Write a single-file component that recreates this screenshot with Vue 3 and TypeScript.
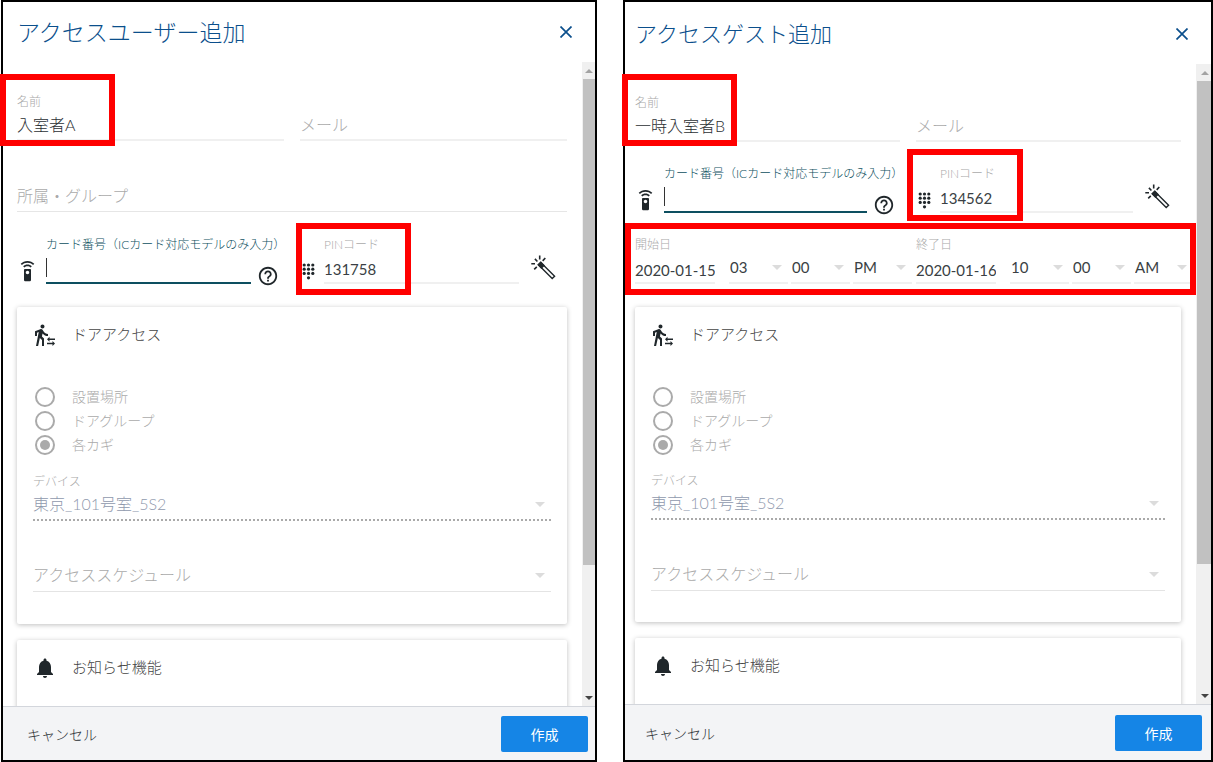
<script setup lang="ts">
import { reactive } from 'vue'

interface TimeSpan {
  key: string
  label: string
  date: string
  hour: string
  minute: string
  half: string
}

interface Dialog {
  id: string
  title: string
  name: string
  hasGroup: boolean
  group: string
  mail: string
  card: string
  pin: string
  access: string
  spans: TimeSpan[]
  marks: string[]
}

const dialogs = reactive<Dialog[]>([
  {
    id: 'user',
    title: 'アクセスユーザー追加',
    name: '入室者A',
    hasGroup: true,
    group: '',
    mail: '',
    card: '',
    pin: '131758',
    access: 'key',
    spans: [],
    marks: ['name', 'pin'],
  },
  {
    id: 'guest',
    title: 'アクセスゲスト追加',
    name: '一時入室者B',
    hasGroup: false,
    group: '',
    mail: '',
    card: '',
    pin: '134562',
    access: 'key',
    spans: [
      { key: 'start', label: '開始日', date: '2020-01-15', hour: '03', minute: '00', half: 'PM' },
      { key: 'end', label: '終了日', date: '2020-01-16', hour: '10', minute: '00', half: 'AM' },
    ],
    marks: ['name', 'pin', 'period'],
  },
])

const accessTypes = [
  { value: 'place', label: '設置場所' },
  { value: 'group', label: 'ドアグループ' },
  { value: 'key', label: '各カギ' },
]
</script>

<template>
  <main class="page">
    <section v-for="d in dialogs" :key="d.id" class="dialog" :class="d.id" role="dialog" :aria-labelledby="d.id + '-title'">
      <header class="head">
        <h1 :id="d.id + '-title'" class="title">{{ d.title }}</h1>
        <button class="close" type="button" aria-label="閉じる">
          <svg width="12" height="12" viewBox="0 0 12 12"><path d="M.5.5l11 11M11.5.5l-11 11" fill="none" stroke="currentColor" stroke-width="1.7" /></svg>
        </button>
      </header>

      <div class="body">
        <form class="form" @submit.prevent>
          <div class="pair">
            <div class="field">
              <label :for="d.id + '-name'">名前</label>
              <input :id="d.id + '-name'" v-model="d.name" type="text" />
            </div>
            <div class="field">
              <label></label>
              <input v-model="d.mail" type="text" placeholder="メール" aria-label="メール" />
            </div>
          </div>

          <div v-if="d.hasGroup" class="field group">
            <label></label>
            <input v-model="d.group" class="thin" type="text" placeholder="所属・グループ" aria-label="所属・グループ" />
          </div>

          <div class="pair codes">
            <div class="cardno">
              <svg class="remote" width="21" height="21" viewBox="0 0 24 24"><path fill="currentColor" d="M15 9H9c-.55 0-1 .45-1 1v12c0 .55.45 1 1 1h6c.55 0 1-.45 1-1V10c0-.55-.45-1-1-1zm-3 6c-1.1 0-2-.9-2-2s.9-2 2-2 2 .9 2 2-.9 2-2 2zM7.05 6.05l1.41 1.41C9.37 6.56 10.62 6 12 6s2.63.56 3.54 1.46l1.41-1.41C15.68 4.78 13.93 4 12 4s-3.68.78-4.95 2.05zM12 0C8.96 0 6.21 1.23 4.22 3.22l1.41 1.41C7.26 3.01 9.51 2 12 2s4.74 1.01 6.36 2.64l1.41-1.41C17.79 1.23 15.04 0 12 0z" /></svg>
              <div class="field focused">
                <label :for="d.id + '-card'">カード番号（ICカード対応モデルのみ入力）</label>
                <div class="entry">
                  <span class="caret"></span>
                  <input :id="d.id + '-card'" v-model="d.card" type="text" />
                </div>
              </div>
              <button class="help" type="button" aria-label="ヘルプ">
                <svg width="22" height="22" viewBox="0 0 24 24"><path fill="currentColor" d="M11 18h2v-2h-2v2zm1-16C6.48 2 2 6.48 2 12s4.48 10 10 10 10-4.48 10-10S17.52 2 12 2zm0 18c-4.41 0-8-3.59-8-8s3.59-8 8-8 8 3.59 8 8-3.59 8-8 8zm0-14c-2.21 0-4 1.79-4 4h2c0-1.1.9-2 2-2s2 .9 2 2c0 2-3 1.75-3 5h2c0-2.25 3-2.5 3-5 0-2.21-1.79-4-4-4z" /></svg>
              </button>
            </div>
            <div class="pin">
              <svg class="dots" width="13" height="17" viewBox="0 0 13 17" fill="currentColor">
                <template v-for="y in [2, 6.2, 10.4]" :key="y">
                  <circle v-for="x in [2.2, 6.5, 10.8]" :key="x" :cx="x" :cy="y" r="1.6" />
                </template>
                <circle cx="6.5" cy="14.8" r="1.6" />
              </svg>
              <div class="field number">
                <label :for="d.id + '-pin'">PINコード</label>
                <input :id="d.id + '-pin'" v-model="d.pin" type="text" />
              </div>
              <button class="wand" type="button" aria-label="自動生成">
                <svg width="25" height="25" viewBox="0 0 25 25" fill="none" stroke="currentColor" stroke-width="1.6">
                  <path d="M8.7.5v4M3.9 3.9l2.5 2.6M11.7 5.9L14.3 3M.3 8.8H4M3.2 14.4l2.6-2.5" />
                  <path d="M7.4 9.8l2.4-2.4L23.6 21.2l-2.4 2.4z" stroke-width="1.4" />
                  <path d="M7.4 9.8l2.4-2.4 3 3-2.4 2.4z" fill="currentColor" />
                </svg>
              </button>
            </div>
          </div>

          <div v-if="d.spans.length" class="period">
            <div v-for="s in d.spans" :key="s.key" class="span">
              <div class="field number date">
                <label :for="d.id + s.key">{{ s.label }}</label>
                <input :id="d.id + s.key" v-model="s.date" type="text" />
              </div>
              <div class="pick time">
                <select v-model="s.hour" :aria-label="s.label + ' 時'"><option>{{ s.hour }}</option></select>
              </div>
              <div class="pick time">
                <select v-model="s.minute" :aria-label="s.label + ' 分'"><option>{{ s.minute }}</option></select>
              </div>
              <div class="pick time">
                <select v-model="s.half" :aria-label="s.label + ' 午前午後'"><option>{{ s.half }}</option></select>
              </div>
            </div>
          </div>

          <section class="card">
            <h2 class="card-title">
              <svg width="24" height="24" viewBox="0 0 24 24"><path fill="currentColor" d="M16.5 15.5H22V17h-5.5v1.75L14 16.25l2.5-2.5v1.75M19.5 19.75V18l2.5 2.5-2.5 2.5v-1.75H14v-1.5h5.5M9.5 5.5c1.1 0 2-.9 2-2s-.9-2-2-2-2 .9-2 2 .9 2 2 2M5.75 8.9L3 23h2.1l1.75-8L9 17v6h2v-7.55L8.95 13.4l.6-3C10.85 12 12.8 13 15 13v-2c-1.85 0-3.45-1-4.35-2.45l-.95-1.6C9.35 6.35 8.7 6 8 6c-.25 0-.5.05-.75.15L2 8.3V13h2V9.65l1.75-.75" /></svg>
              <span>ドアアクセス</span>
            </h2>
            <div class="radios" role="radiogroup" aria-label="ドアアクセス">
              <label v-for="a in accessTypes" :key="a.value" class="radio">
                <input v-model="d.access" type="radio" :name="d.id + '-access'" :value="a.value" disabled />
                <span>{{ a.label }}</span>
              </label>
            </div>
            <div class="field device">
              <label :for="d.id + '-device'">デバイス</label>
              <div class="pick">
                <select :id="d.id + '-device'" disabled><option>東京_101号室_5S2</option></select>
              </div>
            </div>
            <div class="field schedule">
              <label></label>
              <div class="pick">
                <select aria-label="アクセススケジュール"><option>アクセススケジュール</option></select>
              </div>
            </div>
          </section>

          <section class="card notice">
            <h2 class="card-title">
              <svg width="24" height="24" viewBox="0 0 24 24"><path fill="currentColor" d="M12 22c1.1 0 2-.9 2-2h-4c0 1.1.89 2 2 2zm6-6v-5c0-3.07-1.64-5.64-4.5-6.32V4c0-.83-.67-1.5-1.5-1.5s-1.5.67-1.5 1.5v.68C7.63 5.36 6 7.92 6 11v5l-2 2v1h16v-1l-2-2z" /></svg>
              <span>お知らせ機能</span>
            </h2>
          </section>
        </form>

        <div class="scrollbar" aria-hidden="true">
          <span class="arrow up"></span>
          <span class="thumb"></span>
          <span class="rest"></span>
          <span class="arrow down"></span>
        </div>
      </div>

      <footer class="foot">
        <button class="cancel" type="button">キャンセル</button>
        <button class="create" type="button">作成</button>
      </footer>

      <span v-for="m in d.marks" :key="m" class="mark" :class="m"></span>
    </section>
  </main>
</template>

<style>
body {
  margin: 0;
  background: #fff;
}
</style>

<style scoped>
* {
  box-sizing: border-box;
}

.page {
  display: flex;
  gap: 26px;
  height: 100vh;
  padding-left: 1px;
  overflow: hidden;
  font-family: Lato, "Noto Sans CJK JP", sans-serif;
  font-weight: 300;
  color: #2b2f33;
}

button,
input,
select {
  margin: 0;
  padding: 0;
  border: 0;
  border-radius: 0;
  background: none;
  font: inherit;
  color: inherit;
  outline: none;
}

svg {
  display: block;
  flex: none;
}

.dialog {
  --head: 60px;
  --head-top: 0px;
  --title: 23px;
  --foot: 54px;
  --foot-right: 7px;
  --left: 14px;
  --top: 31px;
  --bar: 13px;
  --radio-gap: 16px;
  --card-end: 32px;
  position: relative;
  display: flex;
  flex-direction: column;
  flex: 596 1 0;
  min-width: 0;
  border: 2px solid #000;
  background: #fff;
}

.dialog.guest {
  --head: 62px;
  --head-top: 2px;
  --title: 22px;
  --foot: 56px;
  --foot-right: 9px;
  --left: 10px;
  --top: 30px;
  --bar: 15px;
  --radio-gap: 15px;
  --card-end: 31px;
  flex-grow: 590;
}

.head {
  display: flex;
  align-items: center;
  justify-content: space-between;
  flex: none;
  height: var(--head);
  padding: var(--head-top) 23px 0 var(--left);
  color: #0b4f8c;
}

.title {
  margin: 0;
  font-size: var(--title);
  font-weight: 300;
  line-height: 32px;
}

.body {
  display: flex;
  flex: 1;
  min-height: 0;
}

.form {
  flex: 1;
  min-width: 0;
  padding: var(--top) 15px 0 var(--left);
  overflow: hidden;
}

.pair {
  display: grid;
  grid-template-columns: minmax(0, 1fr) minmax(0, 1fr);
  gap: 16px;
}

.field {
  display: flex;
  flex-direction: column;
  min-width: 0;
  font-size: 16px;
}

.field > label {
  height: 16px;
  font-size: 12px;
  line-height: 18px;
  white-space: nowrap;
  color: #aaa;
}

.field input {
  width: 100%;
  height: 32px;
  border-bottom: 2px solid #f0f0f0;
}

.field input.thin {
  border-bottom: 1px solid #e6e6e6;
}

.field input::placeholder {
  color: #aaa;
  opacity: 1;
}

.number input {
  padding-top: 4px;
  font-size: 15px;
  font-weight: 400;
  color: #3a3f44;
}

.group {
  margin-top: 23px;
}

.codes {
  margin-top: 24px;
}

.guest .codes {
  margin-top: 23px;
}

.cardno,
.pin {
  display: flex;
  align-items: flex-end;
  min-width: 0;
  color: #20272b;
}

.cardno .field,
.pin .field {
  flex: 1;
}

.remote {
  margin: 0 8px 2px 0;
}

.focused > label {
  color: #0d4f60;
}

.focused .entry {
  display: flex;
  align-items: center;
  height: 32px;
  border-bottom: 2px solid #0d4f60;
}

.focused input {
  min-width: 0;
  height: 30px;
  border: 0;
}

.caret {
  flex: none;
  width: 1px;
  height: 19px;
  background: #333;
}

.help {
  margin: 0 5px -3px 6px;
}

.dots {
  margin: 0 9px 4px 2px;
}

.wand {
  margin: 0 11px 4px 12px;
}

.period {
  display: grid;
  grid-template-columns: 1fr 1fr;
  gap: 4px;
  margin: 23px -12px 0 0;
}

.span {
  display: flex;
  align-items: flex-end;
  gap: 3px;
}

.date {
  flex: none;
  width: 80px;
  margin-right: 11px;
}

.date input {
  padding-top: 5px;
}

.pick {
  position: relative;
  display: flex;
  height: 32px;
  border-bottom: 2px solid #f0f0f0;
}

.pick::after {
  content: "";
  position: absolute;
  right: 6px;
  top: 13px;
  border: 5px solid transparent;
  border-top-color: #dcdcdc;
  border-bottom: 0;
  pointer-events: none;
}

.pick select {
  width: 100%;
  padding-bottom: 2px;
  appearance: none;
  opacity: 1;
}

.time {
  flex: 1;
  font-size: 15px;
  font-weight: 400;
  color: #3a3f44;
}

.time select {
  padding: 0 0 0 1px;
}

.card {
  margin-top: 23px;
  padding: 14px 16px var(--card-end);
  border-radius: 2px;
  background: #fff;
  box-shadow: 0 1px 5px rgba(0, 0, 0, 0.25);
}

.card.notice {
  min-height: 120px;
  margin-top: 16px;
}

.card-title {
  display: flex;
  align-items: center;
  gap: 15px;
  height: 28px;
  margin: 0;
  font-size: 15px;
  font-weight: 300;
  color: #444;
}

.card-title span {
  padding-bottom: 4px;
}

.card-title svg {
  color: #20272b;
}

.radios {
  margin-top: 36px;
}

.radio {
  display: flex;
  align-items: center;
  gap: 17px;
  height: 24px;
  padding-left: 2px;
  font-size: 14px;
  color: #aaa;
}

.radio span {
  padding-bottom: 3px;
}

.radio input {
  display: grid;
  place-items: center;
  width: 20px;
  height: 20px;
  border: 2px solid #aaa;
  border-radius: 50%;
  appearance: none;
}

.radio input:checked::before {
  content: "";
  width: 10px;
  height: 10px;
  border-radius: 50%;
  background: #aaa;
}

.device {
  margin-top: var(--radio-gap);
}

.device .pick {
  border-bottom: 2px dotted #aaa;
  color: #8f99ad;
}

.schedule {
  margin-top: 23px;
}

.schedule .pick {
  border-bottom-width: 1px;
  border-bottom-color: #e4e4e4;
  color: #aaa;
}

.scrollbar {
  display: flex;
  flex-direction: column;
  flex: none;
  width: var(--bar);
  background: #f0f0f0;
}

.arrow {
  display: grid;
  place-items: center;
  flex: none;
  height: 17px;
  padding-left: 2px;
}

.arrow::before {
  content: "";
  border: 4px solid transparent;
}

.arrow.up::before {
  border-top: 0;
  border-bottom-color: #a3a3a3;
}

.arrow.down::before {
  border-bottom: 0;
  border-top-color: #444;
}

.thumb {
  flex: 486;
  margin-left: 1px;
  background: #c1c1c1;
}

.rest {
  flex: 124;
}

.foot {
  display: flex;
  align-items: center;
  justify-content: space-between;
  flex: none;
  height: var(--foot);
  padding: 0 var(--foot-right) 0 calc(var(--left) + 10px);
  border-top: 1px solid #d3d6dc;
  background: #f3f4f6;
  font-size: 14px;
}

.create {
  width: 87px;
  height: 36px;
  border-radius: 2px;
  background: #1585e6;
  color: #fff;
  font-weight: 400;
}

.mark {
  position: absolute;
  width: 115px;
  height: 72px;
  border: 6px solid #f00;
  pointer-events: none;
}

.mark.name {
  left: -3px;
  top: 72px;
}

.mark.pin {
  left: 293px;
  top: 221px;
}

.guest .mark.pin {
  left: 282px;
  top: 147px;
  width: 116px;
}

.mark.period {
  left: 0;
  right: 15px;
  top: 221px;
  width: auto;
  margin: 0;
}
</style>
